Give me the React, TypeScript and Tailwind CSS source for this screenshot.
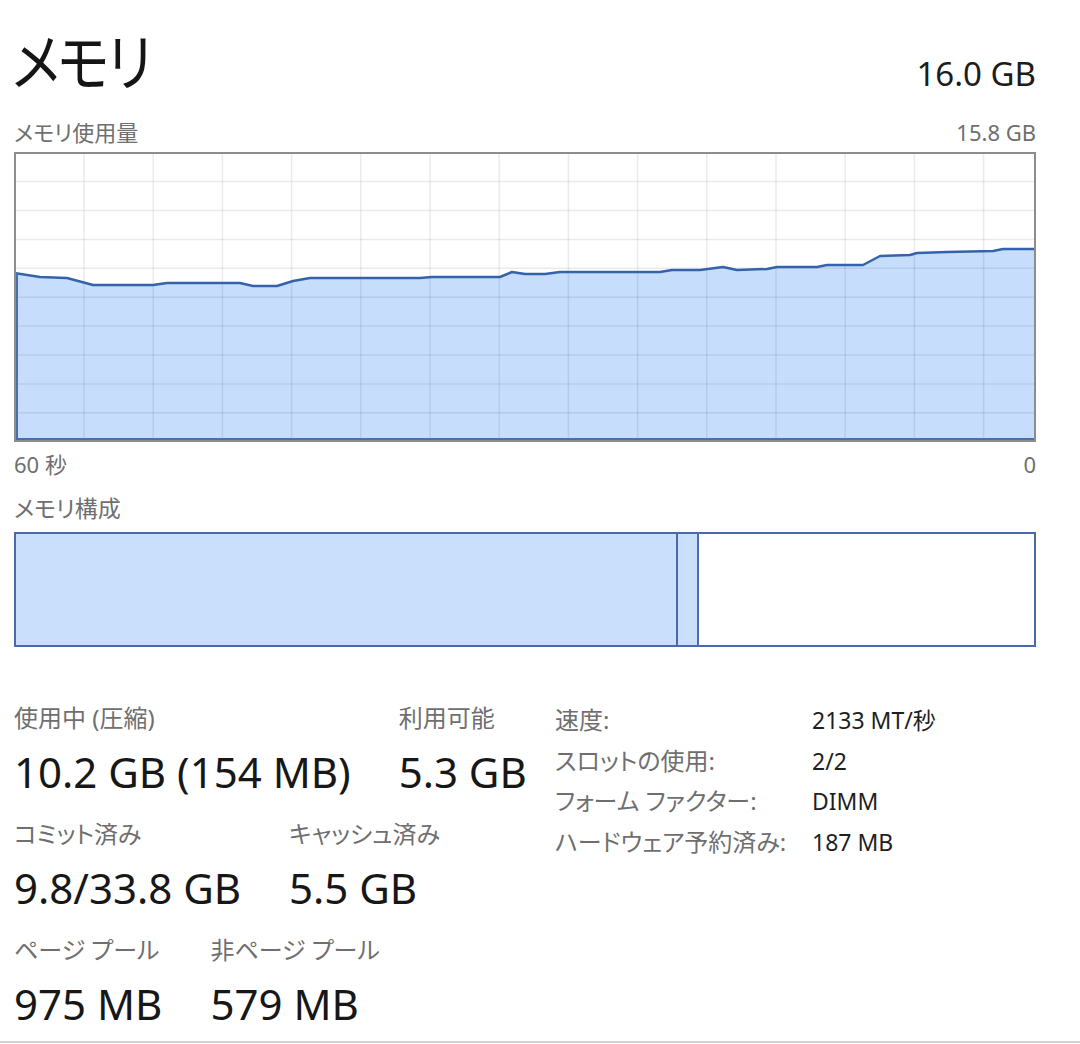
import React from 'react';

// memory usage samples, page coordinates of the graph (box starts at 16,154 inside border)
const usage: [number, number][] = [
    [14, 273], [40, 277], [67, 278], [93, 285], [153, 285], [167, 283], [240, 283],
    [253, 286], [277, 286], [293, 281], [310, 278], [420, 278], [432, 277], [500, 277],
    [512, 272], [525, 274], [545, 274], [560, 272], [660, 272], [672, 270], [700, 270],
    [723, 267], [737, 270], [767, 269], [777, 267], [817, 267], [827, 265], [863, 265],
    [880, 256], [910, 255], [917, 253], [947, 252], [993, 251], [1003, 249], [1036, 249],
];

const OX = 16;
const OY = 154;
const W = 1018;
const H = 286;

const UsageGraph: React.FC = () => {
    const pts = usage.map(([x, y]) => [x - OX, y - OY] as [number, number]);
    const line = pts.map(([x, y]) => `${x},${y}`).join(' ');
    const area = `0,${H} ${line} ${W},${H}`;
    const vLines = Array.from({ length: 14 }, (_, k) => 84 + 69.2 * k - OX);
    const hLines = Array.from({ length: 9 }, (_, j) => 152.7 + 28.9 * (j + 1) - OY);

    return (
        <div className="h-[290px] border-2 border-[#8d8d8d] bg-white">
            <svg width={W} height={H} viewBox={`0 0 ${W} ${H}`} className="block">
                <polygon points={area} fill="#c6ddfb" />
                {vLines.map(x => (
                    <line key={'v' + x} x1={x} y1={0} x2={x} y2={H} stroke="#000" strokeOpacity={0.08} strokeWidth={1.5} />
                ))}
                {hLines.map(y => (
                    <line key={'h' + y} x1={0} y1={y} x2={W} y2={y} stroke="#000" strokeOpacity={0.08} strokeWidth={1.5} />
                ))}
                <polyline points={line} fill="none" stroke="#3563ab" strokeWidth={2.5} strokeLinejoin="round" />
                <line x1={1} y1={pts[0][1]} x2={1} y2={H} stroke="#4a6fb0" strokeWidth={2} />
                <line x1={0} y1={H - 1} x2={W} y2={H - 1} stroke="#4a6fb0" strokeWidth={2} />
            </svg>
        </div>
    );
};

const Stat: React.FC<{ label: string; value: string }> = ({ label, value }) => (
    <div className="flex flex-col">
        <span className="text-[24px] leading-[30px] text-[#6f6f6f] whitespace-nowrap [font-feature-settings:'palt']">{label}</span>
        <span className="mt-[15px] text-[42px] leading-[48px] text-[#171717] whitespace-nowrap">{value}</span>
    </div>
);

const details: [string, string][] = [
    ['速度:', '2133 MT/秒'],
    ['スロットの使用:', '2/2'],
    ['フォーム ファクター:', 'DIMM'],
    ['ハードウェア予約済み:', '187 MB'],
];

export default function App() {
    return (
        <div
            className="w-[1080px] h-[1044px] bg-white flex flex-col overflow-hidden"
            style={{ fontFamily: '"Noto Sans", "Noto Sans CJK JP", sans-serif' }}
        >
            <div className="flex flex-col pl-[14px] pr-[44px]">
                {/* header */}
                <div className="flex justify-between items-baseline pt-[26px]">
                    <span className="inline-block origin-left scale-x-[0.88] text-[62px] leading-[72px] text-[#151515] tracking-[-0.04em] [font-feature-settings:'palt'] -ml-[2px]">メモリ</span>
                    <span className="text-[33px] leading-[40px] text-[#1c1c1c]">16.0 GB</span>
                </div>
                <div className="flex justify-between items-baseline mt-[21px] text-[22px] leading-[26px] text-[#6f6f6f] [font-feature-settings:'palt']">
                    <span>メモリ使用量</span>
                    <span>15.8 GB</span>
                </div>

                <div className="mt-[7px]">
                    <UsageGraph />
                </div>

                <div className="flex justify-between mt-[9px] text-[22px] leading-[26px] text-[#6f6f6f]">
                    <span>60 秒</span>
                    <span>0</span>
                </div>
                <div className="mt-[17px] text-[23px] leading-[28px] text-[#6f6f6f] [font-feature-settings:'palt']">メモリ構成</div>

                {/* composition */}
                <div className="mt-[10px] h-[115px] border-2 border-[#4a6aad] flex">
                    <div className="w-[662px] bg-[#c9dffb] border-r-2 border-[#4a6aad]" />
                    <div className="w-[21px] bg-[#c9dffb] border-r-2 border-[#4a6aad]" />
                    <div className="flex-1 bg-white" />
                </div>

                {/* stats */}
                <div className="flex items-start mt-[53px]">
                    <div className="w-[541px] flex flex-col gap-[23px] pt-[3px]">
                        <div className="flex gap-[48px]">
                            <Stat label="使用中 (圧縮)" value="10.2 GB (154 MB)" />
                            <Stat label="利用可能" value="5.3 GB" />
                        </div>
                        <div className="flex gap-[48px]">
                            <Stat label="コミット済み" value="9.8/33.8 GB" />
                            <Stat label="キャッシュ済み" value="5.5 GB" />
                        </div>
                        <div className="flex gap-[48px]">
                            <Stat label="ページ プール" value="975 MB" />
                            <Stat label="非ページ プール" value="579 MB" />
                        </div>
                    </div>
                    <div className="grid grid-cols-[257px_auto] auto-rows-[40.5px] items-center">
                        {details.map(([k, v]) => (
                            <React.Fragment key={k}>
                                <span className="text-[24px] leading-[30px] text-[#6f6f6f] whitespace-nowrap [font-feature-settings:'palt']">{k}</span>
                                <span className="text-[23px] leading-[30px] text-[#1f1f1f] whitespace-nowrap">{v}</span>
                            </React.Fragment>
                        ))}
                    </div>
                </div>
            </div>
            <div className="mt-auto mb-[1px] h-[2px] bg-[#d2d2d2]" />
        </div>
    );
}
